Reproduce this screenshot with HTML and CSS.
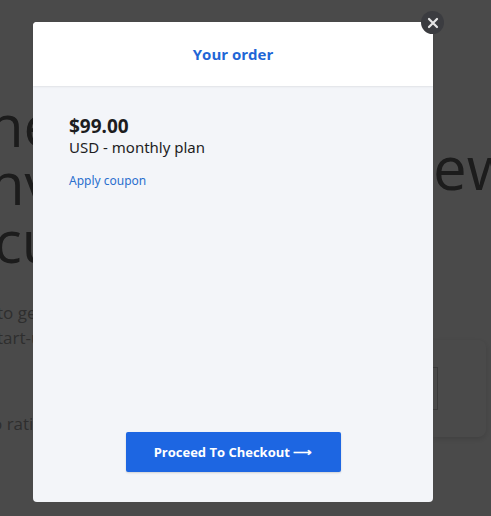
FILE: index.html
```html
<!DOCTYPE html>
<html lang="en">
<head>
    <meta charset="UTF-8">
    <meta name="viewport" content="width=device-width, initial-scale=1.0">
    <title>Your order</title>
    <link rel="stylesheet" href="styles.css">
</head>
<body>

    <!-- page behind the modal -->
    <div class="page">
        <div class="page-main">
            <div class="hero">
                <div class="hero-line l1">ne</div>
                <div class="hero-line l2">nv</div>
                <div class="hero-line l3">cu</div>
            </div>
            <p class="lead">to get<br>tart-up</p>
            <p class="rating">o rating</p>
        </div>
        <div class="page-side">
            <div class="side-title">ew</div>
            <div class="side-card"><div class="side-card-input"></div></div>
        </div>
    </div>

    <div class="overlay"></div>

    <div class="modal">
        <div class="modal-header">
            <h2>Your order</h2>
        </div>
        <div class="modal-body">
            <div class="price">$99.00</div>
            <div class="plan">USD - monthly plan</div>
            <a href="#" class="coupon">Apply coupon</a>
            <div class="actions">
                <button class="checkout">Proceed To Checkout &#10230;</button>
            </div>
        </div>
        <button class="close" aria-label="Close">
            <svg width="12" height="12" viewBox="0 0 12 12"><path d="M2 2 L10 10 M10 2 L2 10" stroke="#e6e6e6" stroke-width="2.2" stroke-linecap="round"/></svg>
        </button>
    </div>

</body>
</html>
```

FILE: styles.css
```css
body {
    margin: 0;
    font-family: "Noto Sans", Arial, sans-serif;
    background-color: #fff;
    color: #111;
    width: 491px;
    height: 516px;
    overflow: hidden;
    position: relative;
}
.page {
    display: flex;
    height: 516px;
    overflow: hidden;
    font-family: "Open Sans", sans-serif;
}
.page-main {
    width: 433px;
    flex-shrink: 0;
    padding-top: 96px;
}
.hero {
    font-size: 58px;
    line-height: 58px;
    color: #606060;
}
.l1 { margin-left: -12px; }
.l2 { margin-left: -11px; }
.l3 { margin-left: -6px; }
.lead {
    font-size: 17px;
    line-height: 25px;
    color: #a0a0a0;
    margin: 30px 0 0 -3px;
}
.rating {
    font-size: 17px;
    color: #a0a0a0;
    margin: 62px 0 0 -8px;
}
.page-side {
    flex: 1;
    padding: 137px 5px 0 0;
    min-width: 0;
}
.side-title {
    font-size: 60px;
    line-height: 60px;
    color: #606060;
    white-space: nowrap;
}
.side-card {
    box-sizing: border-box;
    margin-top: 143px;
    height: 97px;
    border-radius: 0 8px 8px 0;
    background: #fff;
    box-shadow: 0 2px 6px rgba(0,0,0,0.15);
    padding-top: 27px;
}
.side-card-input {
    width: 4px;
    height: 41px;
    background: #fafafa;
    border: 1px solid #c8c8c8;
    border-left: none;
}
.overlay {
    position: absolute;
    inset: 0;
    background: rgba(0, 0, 0, 0.71);
}
.modal {
    position: absolute;
    left: 33px;
    top: 22px;
    width: 400px;
    height: 480px;
    border-radius: 4px;
    background-color: #f3f5f9;
    display: flex;
    flex-direction: column;
}
.modal-header {
    height: 64px;
    background: #fff;
    border-radius: 4px 4px 0 0;
    box-shadow: 0 1px 2px rgba(0,0,0,0.08);
    display: flex;
    align-items: center;
    justify-content: center;
}
.modal-header h2 {
    margin: 0;
    font-family: "Open Sans", sans-serif;
    font-size: 15px;
    font-weight: bold;
    color: #1f66d6;
}
.modal-body {
    flex: 1;
    padding: 29px 36px 30px;
    display: flex;
    flex-direction: column;
}
.price {
    font-size: 19px;
    font-weight: bold;
    line-height: 22px;
    color: #1d1d1f;
}
.plan {
    font-size: 15px;
    line-height: 20px;
    color: #1d1d1f;
}
.coupon {
    margin-top: 15px;
    font-size: 12px;
    color: #2a6fce;
    text-decoration: none;
}
.actions {
    margin-top: auto;
    display: flex;
    justify-content: center;
}
.checkout {
    width: 215px;
    height: 40px;
    border: none;
    border-radius: 2px;
    background-color: #1d66e2;
    color: #fff;
    font-family: "Open Sans", sans-serif;
    font-size: 13px;
    font-weight: bold;
    box-shadow: 0 1px 2px rgba(0,0,0,0.15);
}
.close {
    position: absolute;
    right: -11px;
    top: -11px;
    width: 23px;
    height: 23px;
    border-radius: 50%;
    border: none;
    padding: 0;
    background-color: #3b3c40;
    display: flex;
    align-items: center;
    justify-content: center;
}
```
